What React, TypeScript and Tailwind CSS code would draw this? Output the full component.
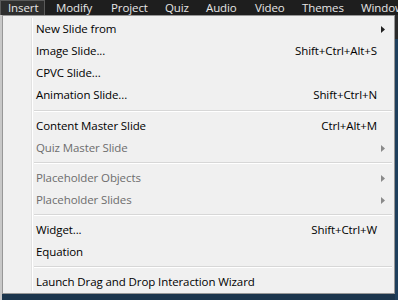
import React from 'react';

type Item =
  | { sep: true; h: number }
  | { sep?: false; label: string; shortcut?: string; sub?: boolean; disabled?: boolean };

const topMenus = [
  { label: 'Insert', cls: 'w-[45px] pl-[7px] bg-[#2e2e2e] border border-[#5a5a5a] border-b-0' },
  { label: 'Modify', cls: 'w-[58px] pl-[11px]' },
  { label: 'Project', cls: 'w-[54px] pl-[8px]' },
  { label: 'Quiz', cls: 'w-[41px] pl-[8px]' },
  { label: 'Audio', cls: 'w-[49px] pl-[8px]' },
  { label: 'Video', cls: 'w-[47px] pl-[8px]' },
  { label: 'Themes', cls: 'w-[59px] pl-[8px]' },
  { label: 'Window', cls: 'w-[60px] pl-[8px]' },
];

const items: Item[] = [
  { label: 'New Slide from', sub: true },
  { label: 'Image Slide...', shortcut: 'Shift+Ctrl+Alt+S' },
  { label: 'CPVC Slide...' },
  { label: 'Animation Slide...', shortcut: 'Shift+Ctrl+N' },
  { sep: true, h: 9 },
  { label: 'Content Master Slide', shortcut: 'Ctrl+Alt+M' },
  { label: 'Quiz Master Slide', sub: true, disabled: true },
  { sep: true, h: 8 },
  { label: 'Placeholder Objects', sub: true, disabled: true },
  { label: 'Placeholder Slides', sub: true, disabled: true },
  { sep: true, h: 8 },
  { label: 'Widget...', shortcut: 'Shift+Ctrl+W' },
  { label: 'Equation' },
  { sep: true, h: 8 },
  { label: 'Launch Drag and Drop Interaction Wizard' },
];

const Arrow = ({ disabled }: { disabled?: boolean }) => (
  <svg width="4" height="7" viewBox="0 0 4 7" className="shrink-0">
    <path d="M0 0 L4 3.5 L0 7 Z" fill={disabled ? '#8a8a8a' : '#222'} />
  </svg>
);

const App = () => {
  return (
    <div className="w-[398px] h-[300px] overflow-hidden flex flex-col bg-[#1c364d] font-['Open_Sans','Noto_Sans',sans-serif]">
      {/* menu bar */}
      <div className="h-[15px] shrink-0 flex items-center bg-[#1e1e1e] text-[#e6e6e6] text-[11.5px] tracking-[-0.1px] leading-none">
        {topMenus.map((m) => (
          <div key={m.label} className={`h-[15px] shrink-0 flex items-center whitespace-nowrap overflow-hidden ${m.cls}`}>
            {m.label}
          </div>
        ))}
      </div>

      <div className="flex flex-1">
        <div className="w-[2px] bg-[#c8c8c8]" />
        <div className="w-[393px] h-[279px] bg-[#f0f0f0] border border-[#979797] pt-[2px] relative text-[11.5px] tracking-[-0.1px]">
          {/* icon gutter line */}
          <div className="absolute left-[28px] top-[2px] bottom-[2px] w-[2px] flex">
            <div className="w-px bg-[#e2e2e2]" />
            <div className="w-px bg-white" />
          </div>
          {items.map((it, i) =>
            it.sep ? (
              <div
                key={i}
                className={`${it.h === 9 ? 'h-[9px]' : 'h-[8px]'} flex items-center pl-[31px] pr-[2px]`}
              >
                <div className="flex-1 flex flex-col">
                  <div className="h-px bg-[#d7d7d7]" />
                  <div className="h-px bg-white" />
                </div>
              </div>
            ) : (
              <div
                key={i}
                className={`h-[22px] flex items-center pl-[33px] pr-[9px] ${it.disabled ? 'text-[#6d6d6d]' : 'text-black'}`}
              >
                <span className="flex-1 whitespace-nowrap">{it.label}</span>
                {it.shortcut && <span className="whitespace-nowrap mr-[8px]">{it.shortcut}</span>}
                {it.sub && <Arrow disabled={it.disabled} />}
              </div>
            )
          )}
        </div>
        <div className="flex-1 flex flex-col">
          <div className="h-[24px] bg-[#2a2a2a]" />
          <div className="flex-1 bg-[#1f3f5c]" />
        </div>
      </div>
    </div>
  );
};

export default App;
